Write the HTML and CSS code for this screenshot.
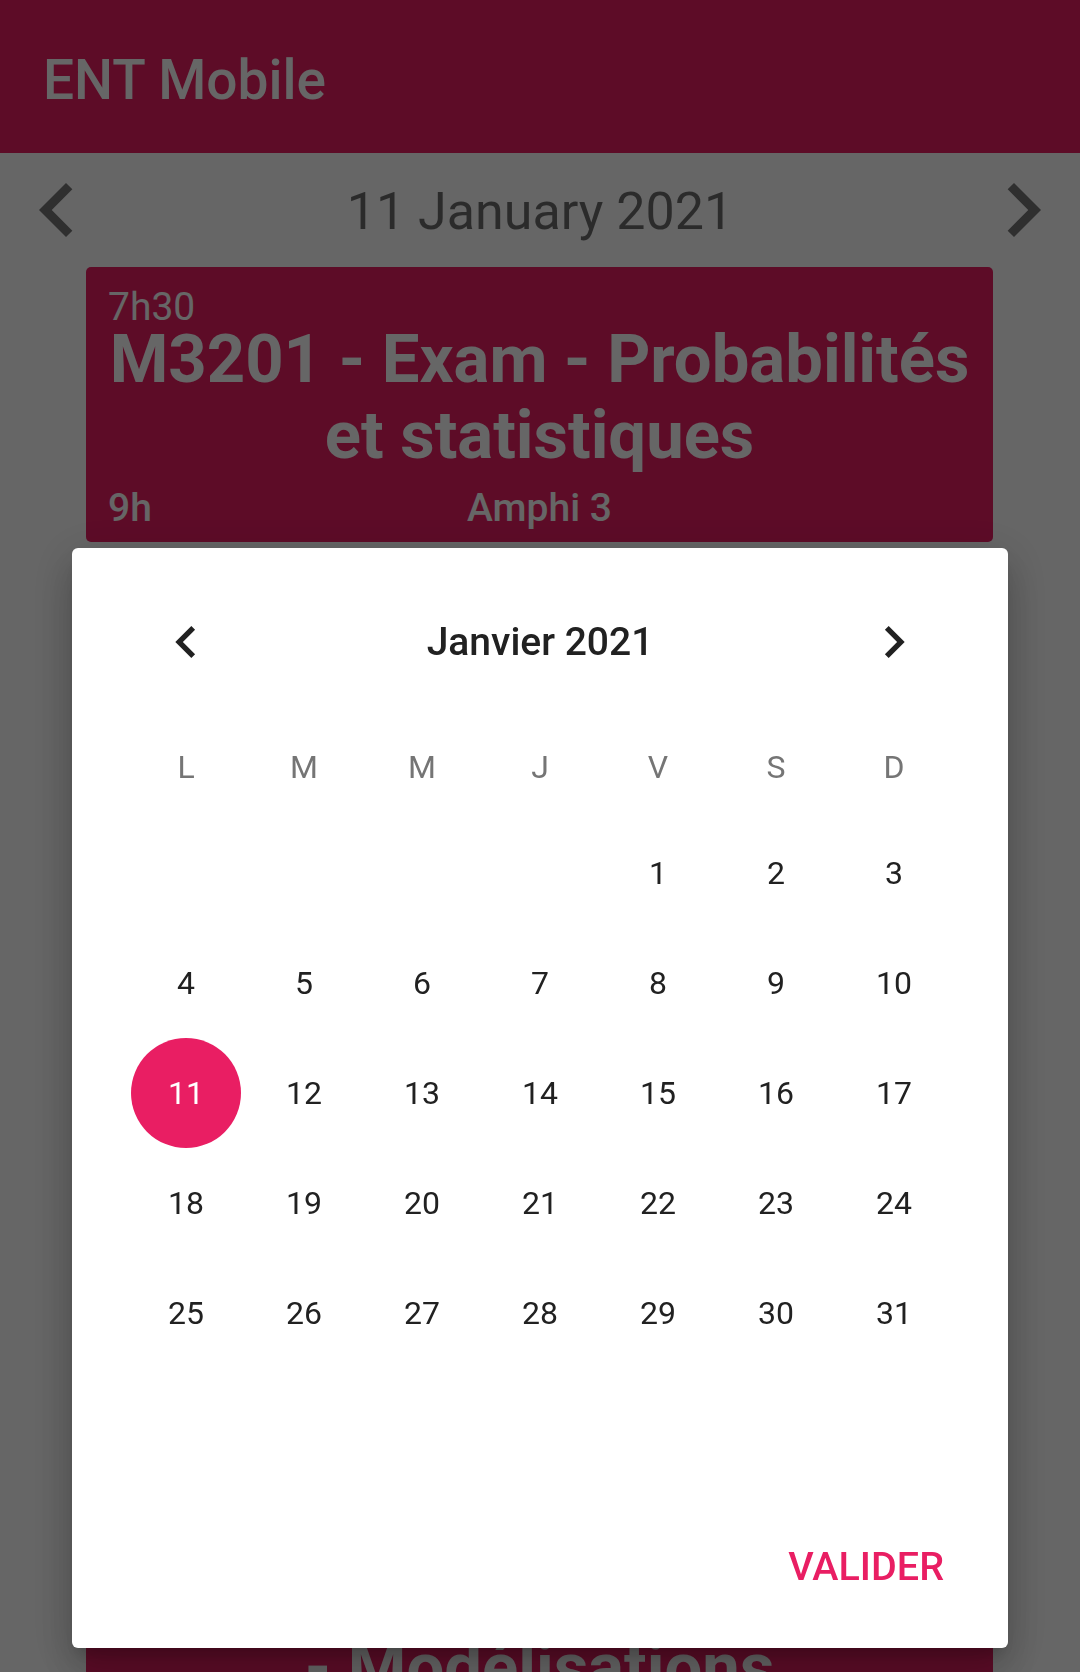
FILE: index.html
```html
<!DOCTYPE html>
<html lang="fr">
<head>
<meta charset="utf-8">
<title>ENT Mobile</title>
<link rel="stylesheet" href="styles.css">
</head>
<body>
<div class="app">
  <header class="appbar">
    <h1 class="appbar-title">ENT Mobile</h1>
  </header>
  <main class="day">
    <nav class="day-nav">
      <button class="icon-btn day-nav-btn" aria-label="Jour précédent">
        <svg viewBox="0 0 24 24"><path d="M15.41 7.41L14 6l-6 6 6 6 1.41-1.41L10.83 12z"/></svg>
      </button>
      <h2 class="day-date">11 January 2021</h2>
      <button class="icon-btn day-nav-btn" aria-label="Jour suivant">
        <svg viewBox="0 0 24 24"><path d="M10 6L8.59 7.41 13.17 12l-4.58 4.59L10 18l6-6z"/></svg>
      </button>
    </nav>
    <ul class="events">
      <li class="event">
        <div class="event-start">7h30</div>
        <div class="event-title">M3201 - Exam - Probabilités et statistiques</div>
        <div class="event-footer">
          <span class="event-end">9h</span>
          <span class="event-room">Amphi 3</span>
          <span></span>
        </div>
      </li>
      <li class="event">
        <div class="event-start">9h30</div>
        <div class="event-title event-title--late">M3202C - Exam <span class="nowrap">- Modélisations</span></div>
        <div class="event-footer">
          <span class="event-end">12h30</span>
          <span class="event-room">Amphi 3</span>
          <span></span>
        </div>
      </li>
    </ul>
  </main>
</div>

<div class="scrim">
  <div class="dialog" role="dialog" aria-label="Choisir une date">
    <div class="cal-header">
      <button class="icon-btn cal-btn" aria-label="Mois précédent">
        <svg viewBox="0 0 24 24"><path d="M15.41 7.41L14 6l-6 6 6 6 1.41-1.41L10.83 12z"/></svg>
      </button>
      <div class="cal-month">Janvier 2021</div>
      <button class="icon-btn cal-btn" aria-label="Mois suivant">
        <svg viewBox="0 0 24 24"><path d="M10 6L8.59 7.41 13.17 12l-4.58 4.59L10 18l6-6z"/></svg>
      </button>
    </div>
    <div class="cal-weekdays">
      <span>L</span><span>M</span><span>M</span><span>J</span><span>V</span><span>S</span><span>D</span>
    </div>
    <div class="cal-grid">
      <span class="cal-day"></span><span class="cal-day"></span><span class="cal-day"></span><span class="cal-day"></span>
      <span class="cal-day">1</span><span class="cal-day">2</span><span class="cal-day">3</span>
      <span class="cal-day">4</span><span class="cal-day">5</span><span class="cal-day">6</span><span class="cal-day">7</span><span class="cal-day">8</span><span class="cal-day">9</span><span class="cal-day">10</span>
      <span class="cal-day"><span class="cal-selected">11</span></span><span class="cal-day">12</span><span class="cal-day">13</span><span class="cal-day">14</span><span class="cal-day">15</span><span class="cal-day">16</span><span class="cal-day">17</span>
      <span class="cal-day">18</span><span class="cal-day">19</span><span class="cal-day">20</span><span class="cal-day">21</span><span class="cal-day">22</span><span class="cal-day">23</span><span class="cal-day">24</span>
      <span class="cal-day">25</span><span class="cal-day">26</span><span class="cal-day">27</span><span class="cal-day">28</span><span class="cal-day">29</span><span class="cal-day">30</span><span class="cal-day">31</span>
    </div>
    <div class="dialog-actions">
      <button class="text-btn">VALIDER</button>
    </div>
  </div>
</div>
</body>
</html>
```

FILE: styles.css
```css
html, body {
  margin: 0;
  padding: 0;
}

body {
  width: 1080px;
  height: 1672px;
  overflow: hidden;
  background: #ffffff;
  font-family: Roboto, "Noto Sans", "Liberation Sans", sans-serif;
  color: rgba(0, 0, 0, 0.87);
}

button {
  font-family: inherit;
  border: 0;
  background: none;
  padding: 0;
  margin: 0;
  cursor: pointer;
}

.nowrap {
  white-space: nowrap;
}

.app {
  display: flex;
  flex-direction: column;
}

/* App bar */
.appbar {
  height: 153px;
  background: #e91e63;
  display: flex;
  align-items: center;
  padding: 7px 0 0 43px;
  box-sizing: border-box;
}

.appbar-title {
  margin: 0;
  font-size: 55px;
  font-weight: 500;
  color: #ffffff;
  line-height: 1;
}

/* Day navigation */
.day-nav {
  height: 114px;
  display: flex;
  align-items: center;
  justify-content: space-between;
  padding: 0 3px;
}

.icon-btn {
  display: flex;
  align-items: center;
  justify-content: center;
}

.day-nav-btn {
  width: 108px;
  height: 108px;
}

.day-nav-btn svg {
  width: 108px;
  height: 108px;
  fill: rgba(0, 0, 0, 0.54);
}

.day-date {
  margin: 0;
  padding-top: 3px;
  font-size: 52px;
  font-weight: 400;
  color: rgba(0, 0, 0, 0.58);
}

/* Events */
.events {
  list-style: none;
  margin: 0;
  padding: 0 87px 0 86px;
  display: flex;
  flex-direction: column;
  gap: 24px;
}

.event {
  background: #e91e63;
  border-radius: 5px;
  color: #ffffff;
  padding: 26px 22px 18px;
  display: flex;
  flex-direction: column;
}

.event-start {
  font-size: 39px;
  line-height: 28px;
  font-weight: 400;
}

.event-title {
  font-size: 67px;
  line-height: 76px;
  font-weight: 700;
  text-align: center;
}

.event-title--late {
  margin-top: 933px;
}

.event-footer {
  margin-top: 19px;
  display: grid;
  grid-template-columns: 1fr auto 1fr;
  font-size: 39px;
  line-height: 32px;
  font-weight: 500;
}

/* Scrim + dialog */
.scrim {
  position: fixed;
  inset: 0;
  background: rgba(0, 0, 0, 0.6);
  display: flex;
  justify-content: center;
  align-items: flex-end;
  padding-bottom: 24px;
  box-sizing: border-box;
}

.dialog {
  width: 936px;
  height: 1100px;
  box-sizing: border-box;
  background: #ffffff;
  border-radius: 6px;
  padding: 62px 55px 35px;
  display: flex;
  flex-direction: column;
  box-shadow: 0 11px 15px -7px rgba(0, 0, 0, 0.2),
              0 24px 38px 3px rgba(0, 0, 0, 0.14),
              0 9px 46px 8px rgba(0, 0, 0, 0.12);
}

.cal-header {
  height: 64px;
  display: grid;
  grid-template-columns: 118px 1fr 118px;
  align-items: center;
  justify-items: center;
}

.cal-btn {
  width: 64px;
  height: 64px;
}

.cal-btn svg {
  width: 64px;
  height: 64px;
  fill: rgba(0, 0, 0, 0.87);
}

.cal-month {
  font-size: 39px;
  font-weight: 500;
  color: #212121;
}

.cal-weekdays {
  margin-top: 41px;
  height: 103px;
  display: grid;
  grid-template-columns: repeat(7, 118px);
  align-items: center;
  justify-items: center;
  font-size: 32px;
  color: #757575;
}

.cal-grid {
  display: grid;
  grid-template-columns: repeat(7, 118px);
  grid-auto-rows: 110px;
  font-size: 32px;
  color: #212121;
}

.cal-day {
  display: flex;
  align-items: center;
  justify-content: center;
}

.cal-selected {
  width: 110px;
  height: 110px;
  border-radius: 50%;
  background: #e91e63;
  color: #ffffff;
  display: flex;
  align-items: center;
  justify-content: center;
}

.dialog-actions {
  margin-top: auto;
  display: flex;
  justify-content: flex-end;
}

.text-btn {
  height: 94px;
  padding: 0 9px 0 12px;
  font-size: 39.5px;
  font-weight: 500;
  color: #e91e63;
}
```
